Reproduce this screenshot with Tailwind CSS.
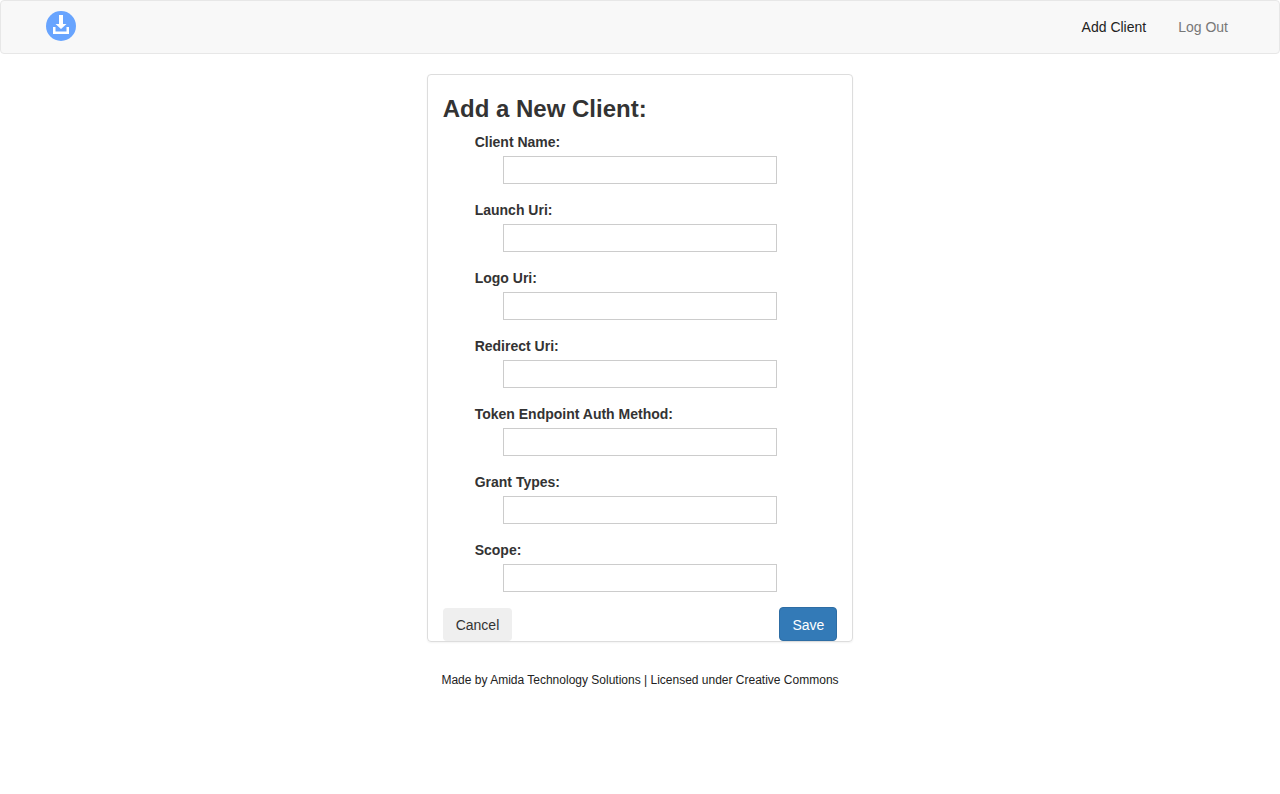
<!DOCTYPE html>
<html lang="en">
<head>
<meta charset="utf-8">
<meta name="viewport" content="width=device-width, initial-scale=1">
<title>Add Client</title>
<script src="https://cdn.jsdelivr.net/npm/@tailwindcss/browser@4"></script>
</head>
<body class="bg-white font-['Liberation_Sans',Arial,sans-serif] text-sm text-[#333]">
<nav class="flex items-center justify-between rounded border border-[#e7e7e7] bg-[#f8f8f8] px-[35px] pt-2.5 pb-[11px]">
  <a href="#" aria-label="Home" class="ml-2.5">
    <svg class="block size-[31px]" viewBox="0 0 31 31" aria-hidden="true">
      <circle cx="15" cy="15" r="15" fill="#68a4fe"/>
      <path fill="#fff" d="M13 4h4v9h3.500l-5.500 5-5.500-5H13zM7 16h2.500v4.500h11V16H23v7H7z"/>
    </svg>
  </a>
  <div class="flex leading-5">
    <a href="#" class="px-4 text-[#222]">Add Client</a>
    <a href="#" class="px-4 text-[#777]">Log Out</a>
  </div>
</nav>
<main class="mx-auto mt-5 w-1/3 rounded border border-[#ddd] px-[15px] pt-5 shadow-xs">
  <form>
    <h1 class="mb-2.5 text-2xl leading-[27px] font-bold">Add a New Client:</h1>
    <div class="flex flex-col gap-4 px-8">
      <div>
        <label for="name" class="mb-1 block leading-5 font-bold">Client Name:</label>
        <div class="px-7"><input id="name" type="text" class="block h-7 w-full border border-[#ccc] px-1"></div>
      </div>
      <div>
        <label for="launch" class="mb-1 block leading-5 font-bold">Launch Uri:</label>
        <div class="px-7"><input id="launch" type="text" class="block h-7 w-full border border-[#ccc] px-1"></div>
      </div>
      <div>
        <label for="logo" class="mb-1 block leading-5 font-bold">Logo Uri:</label>
        <div class="px-7"><input id="logo" type="text" class="block h-7 w-full border border-[#ccc] px-1"></div>
      </div>
      <div>
        <label for="redirect" class="mb-1 block leading-5 font-bold">Redirect Uri:</label>
        <div class="px-7"><input id="redirect" type="text" class="block h-7 w-full border border-[#ccc] px-1"></div>
      </div>
      <div>
        <label for="auth" class="mb-1 block leading-5 font-bold">Token Endpoint Auth Method:</label>
        <div class="px-7"><input id="auth" type="text" class="block h-7 w-full border border-[#ccc] px-1"></div>
      </div>
      <div>
        <label for="grant" class="mb-1 block leading-5 font-bold">Grant Types:</label>
        <div class="px-7"><input id="grant" type="text" class="block h-7 w-full border border-[#ccc] px-1"></div>
      </div>
      <div>
        <label for="scope" class="mb-1 block leading-5 font-bold">Scope:</label>
        <div class="px-7"><input id="scope" type="text" class="block h-7 w-full border border-[#ccc] px-1"></div>
      </div>
    </div>
    <div class="mt-[15px] flex items-end justify-between">
      <button type="button" class="rounded-sm bg-[#efefef] px-[13px] pt-[7px] pb-1.5 leading-5">Cancel</button>
      <button type="submit" class="rounded border border-[#2e6da4] bg-[#337ab7] px-3 pt-[7px] pb-[5px] leading-5 text-white">Save</button>
    </div>
  </form>
</main>
<footer class="mt-7 text-center text-xs leading-5 text-[#222]">Made by Amida Technology Solutions | Licensed under Creative Commons</footer>
</body>
</html>
